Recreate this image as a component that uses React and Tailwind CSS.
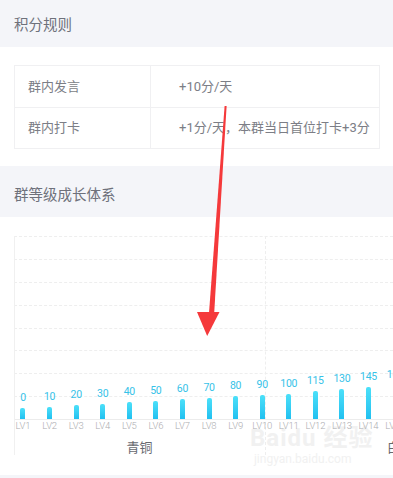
import React from 'react';

const levels = [0, 10, 20, 30, 40, 50, 60, 70, 80, 90, 100, 115, 130, 145, 160];

const rules = [
  { name: '群内发言', desc: '+10分/天' },
  { name: '群内打卡', desc: '+1分/天，本群当日首位打卡+3分' },
];

const App = () => {
  return (
    <div
      className="relative w-[393px] h-[478px] overflow-hidden bg-white"
      style={{ fontFamily: 'Roboto, "Noto Sans CJK SC", sans-serif' }}
    >
      {/* 积分规则 */}
      <div className="h-[47px] bg-[#f4f5f9] px-[14px] flex items-center pt-[5px] text-[14.5px] text-[#6e717b]">
        积分规则
      </div>

      <div className="h-[119px] pt-[18px] px-[14px]">
        <div className="w-[366px] border border-[#f0f0f2]">
          {rules.map((rule, i) => (
            <div
              key={rule.name}
              className={`flex h-[41px] items-center text-[13px] text-[#7c7e86] ${
                i > 0 ? 'border-t border-[#f0f0f2]' : ''
              }`}
            >
              <div className="w-[136px] h-full flex items-center pl-[13px] border-r border-[#f0f0f2]">
                {rule.name}
              </div>
              <div className="pl-[28px]">{rule.desc}</div>
            </div>
          ))}
        </div>
      </div>

      {/* 群等级成长体系 */}
      <div className="h-[51px] bg-[#f4f5f9] px-[14px] flex items-center pt-[9px] text-[14.5px] text-[#6e717b]">
        群等级成长体系
      </div>

      <div className="h-[258px] pt-[19px]">
        <div className="relative h-[219px]">
          {/* grid */}
          <div className="absolute left-[14px] right-0 top-0 h-[183px] flex flex-col">
            {Array.from({ length: 8 }, (_, i) => (
              <div key={i} className="h-[22.875px] border-t border-dashed border-[#eeeeee]" />
            ))}
          </div>
          <div className="absolute left-[14px] right-0 top-[183px] border-t border-[#ececec]" />
          <div className="absolute left-[14px] top-0 bottom-0 w-px bg-[#f0f0f0]" />
          <div className="absolute left-[265px] top-0 bottom-0 border-l border-dashed border-[#eeeeee]" />

          {/* watermark */}
          <div className="absolute left-[250px] top-[190px] text-[#f1f1f1] leading-none">
            <div className="text-[24px] font-bold tracking-[1px]">Baidu 经验</div>
            <div className="text-[12px] mt-[3px] pl-[4px]">jingyan.baidu.com</div>
          </div>

          {/* bars */}
          <div className="relative flex items-end h-[183px] pl-[9.7px]">
            {levels.map((v) => (
              <div key={v} className="w-[26.58px] shrink-0 flex flex-col items-center">
                <span className="text-[10.5px] leading-[12px] mb-[4px] tracking-[-0.3px] text-[#36c2e8]">
                  {v}
                </span>
                <div
                  className="w-[5px] rounded-t-[2px] bg-linear-to-b from-[#4be0f9] to-[#1fc0f0]"
                  style={{ height: `${11 + v * 0.145}px` }}
                />
              </div>
            ))}
          </div>

          <div className="relative flex pl-[9.7px] mt-[1px] h-[12px]">
            {levels.map((v, i) => (
              <div
                key={v}
                className="w-[26.58px] shrink-0 text-center text-[9.5px] leading-[12px] font-light tracking-[-0.2px] text-[#acacb0]"
              >
                LV{i + 1}
              </div>
            ))}
          </div>

          <div className="relative flex pl-[14px] mt-[7px] text-[13px] leading-[18px] text-[#67696f]">
            <div className="w-[251px] shrink-0 text-center">青铜</div>
            <div className="w-[270px] shrink-0 text-center">白银</div>
          </div>
        </div>
      </div>

      <div className="h-[3px] bg-[#f4f5f9]" />

      {/* red arrow */}
      <svg className="absolute left-0 top-0 pointer-events-none" width="393" height="478">
        <polygon points="224.6,106 226.6,106 214.2,313 209,313" fill="#f5393b" />
        <polygon points="197,312 219.5,312 207.2,336" fill="#f5393b" />
      </svg>
    </div>
  );
};

export default App;
